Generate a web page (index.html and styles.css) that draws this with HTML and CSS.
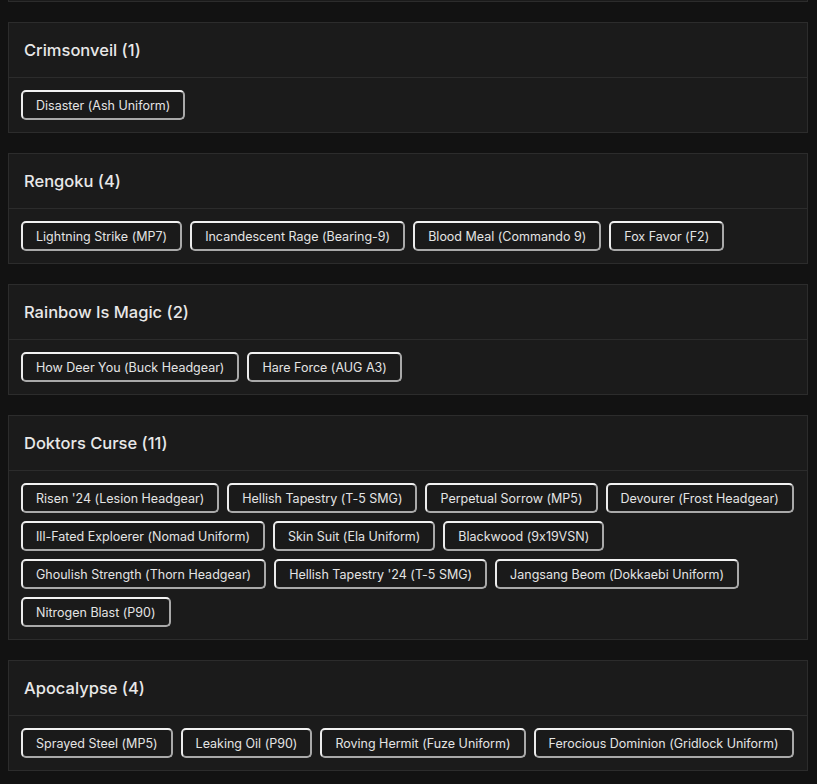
FILE: index.html
```html
<!DOCTYPE html>
<html lang="en">
<head>
<meta charset="utf-8">
<title>Collections</title>
<link rel="stylesheet" href="styles.css">
</head>
<body>
<div class="card card-tail"></div>

<section class="card">
  <header class="card-header"><h2 class="card-title">Crimsonveil (1)</h2></header>
  <div class="card-body">
    <span class="tag">Disaster (Ash Uniform)</span>
  </div>
</section>

<section class="card">
  <header class="card-header"><h2 class="card-title">Rengoku (4)</h2></header>
  <div class="card-body">
    <span class="tag">Lightning Strike (MP7)</span>
    <span class="tag">Incandescent Rage (Bearing-9)</span>
    <span class="tag">Blood Meal (Commando 9)</span>
    <span class="tag">Fox Favor (F2)</span>
  </div>
</section>

<section class="card">
  <header class="card-header"><h2 class="card-title">Rainbow Is Magic (2)</h2></header>
  <div class="card-body">
    <span class="tag">How Deer You (Buck Headgear)</span>
    <span class="tag">Hare Force (AUG A3)</span>
  </div>
</section>

<section class="card">
  <header class="card-header"><h2 class="card-title">Doktors Curse (11)</h2></header>
  <div class="card-body">
    <span class="tag">Risen '24 (Lesion Headgear)</span>
    <span class="tag">Hellish Tapestry (T-5 SMG)</span>
    <span class="tag">Perpetual Sorrow (MP5)</span>
    <span class="tag">Devourer (Frost Headgear)</span>
    <span class="tag">Ill-Fated Exploerer (Nomad Uniform)</span>
    <span class="tag">Skin Suit (Ela Uniform)</span>
    <span class="tag">Blackwood (9x19VSN)</span>
    <span class="tag">Ghoulish Strength (Thorn Headgear)</span>
    <span class="tag">Hellish Tapestry '24 (T-5 SMG)</span>
    <span class="tag">Jangsang Beom (Dokkaebi Uniform)</span>
    <span class="tag">Nitrogen Blast (P90)</span>
  </div>
</section>

<section class="card">
  <header class="card-header"><h2 class="card-title">Apocalypse (4)</h2></header>
  <div class="card-body">
    <span class="tag">Sprayed Steel (MP5)</span>
    <span class="tag">Leaking Oil (P90)</span>
    <span class="tag">Roving Hermit (Fuze Uniform)</span>
    <span class="tag">Ferocious Dominion (Gridlock Uniform)</span>
  </div>
</section>
</body>
</html>
```

FILE: styles.css
```css
html, body {
  background: #121212;
}
body {
  margin: 0 9px 0 8px;
  font-family: "Inter", "Open Sans", "DejaVu Sans", sans-serif;
  font-feature-settings: "calt" 0;
  color: #e6e6e6;
}
.card {
  background: #1b1b1b;
  border: 1px solid #2c2c2c;
  margin-bottom: 20px;
}
.card-tail {
  height: 1px;
  border-top: none;
}
.card-header {
  padding: 15px 15px;
  border-bottom: 1px solid #2c2c2c;
}
.card-title {
  margin: 0;
  font-size: 16.5px;
  line-height: 24px;
  font-weight: 500;
  color: #e8e8e8;
}
.card-body {
  padding: 12px;
  display: flex;
  flex-wrap: wrap;
  gap: 8px;
}
.tag {
  display: inline-block;
  height: 30px;
  box-sizing: border-box;
  padding: 0 13px;
  line-height: 27px;
  font-size: 12.5px;
  color: #e4e4e4;
  background: #1a1a1a;
  border: 2px solid #c9c9c9;
  border-top-color: #f2f2f2;
  border-left-color: #ececec;
  border-right-color: #a9a9a9;
  border-bottom-color: #a9a9a9;
  border-radius: 5px;
  white-space: nowrap;
}
```
